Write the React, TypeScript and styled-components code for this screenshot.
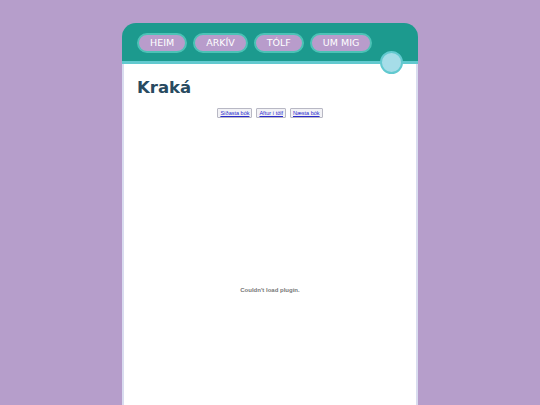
import styled, { createGlobalStyle } from "styled-components";

const GlobalStyle = createGlobalStyle`
  html, body {
    margin: 0;
    padding: 0;
    background: #b69ecb;
    height: 100%;
    overflow: hidden;
  }
`;

const Page = styled.div`
  display: flex;
  justify-content: center;
  padding-top: 23px;
  height: 405px;
  box-sizing: border-box;
`;

const Card = styled.div`
  width: 296px;
  display: flex;
  flex-direction: column;
  border-radius: 14px 14px 0 0;
  overflow: hidden;
`;

const Header = styled.div`
  position: relative;
  background: #1c9a8e;
  height: 37px;
  border-bottom: 3px solid #62c9cf;
  display: flex;
  align-items: center;
  gap: 6px;
  padding: 1px 0 0 15px;
  box-sizing: content-box;
`;

const NavPill = styled.a`
  height: 16px;
  padding: 0 11px;
  display: flex;
  align-items: center;
  background: #b89ccb;
  border: 2px solid #4cc2b6;
  border-radius: 10px;
  color: #ffffff;
  font-family: "DejaVu Sans", Verdana, sans-serif;
  font-size: 9.5px;
  text-decoration: none;
`;

const Dot = styled.div`
  position: absolute;
  right: 15px;
  bottom: -13px;
  width: 19px;
  height: 19px;
  border-radius: 50%;
  background: #a6dde8;
  border: 2px solid #62c9cf;
  z-index: 2;
`;

const Body = styled.div`
  flex: 1;
  background: #ffffff;
  border-left: 2px solid #d9dcef;
  border-right: 2px solid #d9dcef;
  padding: 14px 13px 0;
  display: flex;
  flex-direction: column;
`;

const Title = styled.h1`
  margin: 0;
  font-family: "DejaVu Sans", Verdana, sans-serif;
  font-weight: bold;
  font-size: 16.5px;
  color: #284a60;
`;

const Pager = styled.div`
  display: flex;
  justify-content: center;
  gap: 4px;
  margin-top: 11px;
`;

const PageButton = styled.a`
  display: flex;
  align-items: center;
  height: 8px;
  padding: 0 2px;
  border: 1px solid #b8b8c4;
  border-radius: 1px;
  background: #f2f2f6;
  font-family: "Liberation Sans", Arial, sans-serif;
  font-size: 5.5px;
  color: #2a2acc;
  text-decoration: underline;
`;

const Plugin = styled.div`
  margin-top: 169px;
  text-align: center;
  font-family: "Liberation Sans", Arial, sans-serif;
  font-size: 6px;
  font-weight: bold;
  color: #777777;
`;

export default function App() {
  return (
    <>
      <GlobalStyle />
      <Page>
        <Card>
          <Header>
            <NavPill>HEIM</NavPill>
            <NavPill>ARKÍV</NavPill>
            <NavPill>TÓLF</NavPill>
            <NavPill>UM MIG</NavPill>
            <Dot />
          </Header>
          <Body>
            <Title>Kraká</Title>
            <Pager>
              <PageButton>Síðasta bók</PageButton>
              <PageButton>Aftur í tölf</PageButton>
              <PageButton>Næsta bók</PageButton>
            </Pager>
            <Plugin>Couldn't load plugin.</Plugin>
          </Body>
        </Card>
      </Page>
    </>
  );
}
